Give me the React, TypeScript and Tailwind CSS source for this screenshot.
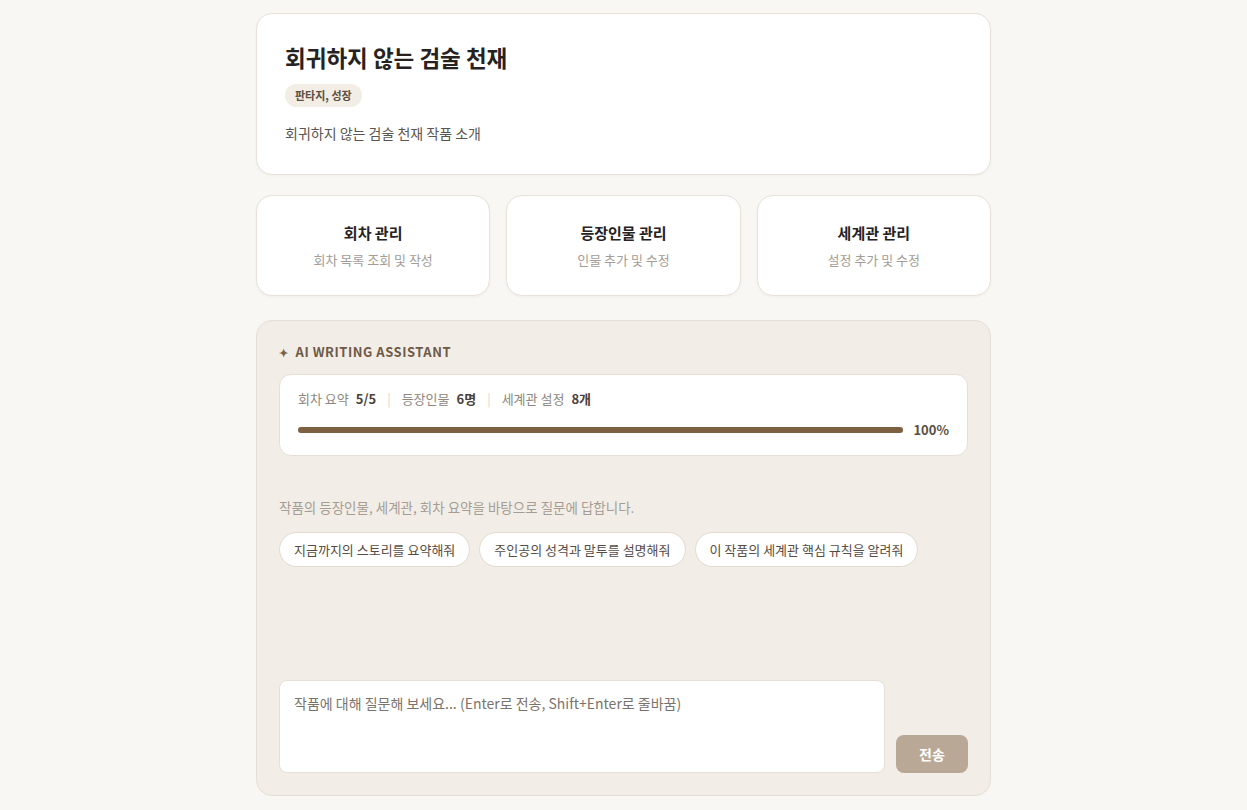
const font = { fontFamily: '"Noto Sans CJK KR", "Noto Sans", sans-serif' };

const menus = [
  { title: '회차 관리', desc: '회차 목록 조회 및 작성' },
  { title: '등장인물 관리', desc: '인물 추가 및 수정' },
  { title: '세계관 관리', desc: '설정 추가 및 수정' },
];

const suggestions = [
  '지금까지의 스토리를 요약해줘',
  '주인공의 성격과 말투를 설명해줘',
  '이 작품의 세계관 핵심 규칙을 알려줘',
];

export default function App() {
  const progress = 100;

  return (
    <div className="min-h-[810px] bg-[#f9f7f3] text-[#2b2724]" style={font}>
      <div className="mx-auto w-[735px] pt-[13px] pb-4">
        {/* work header */}
        <div className="rounded-2xl border border-[#e8e2d8] bg-white px-7 pt-[26px] pb-[31px] shadow-[0_1px_3px_rgba(0,0,0,0.04)]">
          <h1 className="text-[22.5px] font-bold leading-[34px] text-[#26221f]">회귀하지 않는 검술 천재</h1>
          <span className="mt-[10px] inline-block rounded-full bg-[#f2ede5] px-[10px] py-[3px] text-[11px] font-bold leading-[17px] text-[#5e5044]">
            판타지, 성장
          </span>
          <p className="mt-[16px] text-[14px] leading-[20px] text-[#5a5550]">회귀하지 않는 검술 천재 작품 소개</p>
        </div>

        {/* menu cards */}
        <div className="mt-[20px] grid grid-cols-3 gap-4">
          {menus.map((m) => (
            <div
              key={m.title}
              className="flex h-[101px] flex-col items-center justify-center rounded-2xl border border-[#e8e2d8] bg-white shadow-[0_1px_3px_rgba(0,0,0,0.04)]"
            >
              <div className="text-[15px] font-bold leading-[22px] text-[#26221f]">{m.title}</div>
              <div className="mt-[7px] text-[13px] leading-[18px] text-[#a39d96]">{m.desc}</div>
            </div>
          ))}
        </div>

        {/* assistant panel */}
        <div className="mt-[24px] rounded-2xl border border-[#e5dfd5] bg-[#f2eee7] p-[22px]">
          <div className="flex items-center gap-[7px] text-[13px] font-bold leading-[18px] tracking-[0.04em] text-[#6f5a47]">
            <span className="text-[11px] text-[#7d5f42]">✦</span>
            AI WRITING ASSISTANT
          </div>

          <div className="mt-[13px] rounded-xl border border-[#e5dfd5] bg-white px-[18px] pt-[15px] pb-[16px]">
            <div className="flex items-center text-[13px] leading-[18px] text-[#8e877f]">
              <span>회차 요약</span>
              <span className="ml-[7px] font-bold text-[#4a413a]">5/5</span>
              <span className="mx-[11px] text-[#ddd6cc]">|</span>
              <span>등장인물</span>
              <span className="ml-[7px] font-bold text-[#4a413a]">6명</span>
              <span className="mx-[11px] text-[#ddd6cc]">|</span>
              <span>세계관 설정</span>
              <span className="ml-[7px] font-bold text-[#4a413a]">8개</span>
            </div>
            <div className="mt-[13px] flex items-center gap-[10px]">
              <div className="h-[6px] flex-1 rounded-full bg-[#ece6dc]">
                <div className="h-full rounded-full bg-[#7d5f42]" style={{ width: `${progress}%` }} />
              </div>
              <span className="text-[13px] font-bold leading-[18px] text-[#5a4f45]">{progress}%</span>
            </div>
          </div>

          <p className="mt-[41px] text-[13.5px] leading-[20px] text-[#a59d93]">
            작품의 등장인물, 세계관, 회차 요약을 바탕으로 질문에 답합니다.
          </p>
          <div className="mt-[15px] flex gap-[9px]">
            {suggestions.map((s) => (
              <button
                key={s}
                className="h-[35px] rounded-full border border-[#e2dace] bg-white px-[14px] text-[13px] text-[#574d44]"
                style={font}
              >
                {s}
              </button>
            ))}
          </div>

          <div className="mt-[113px] flex items-end gap-[11px]">
            <textarea
              className="h-[93px] flex-1 resize-none rounded-lg border border-[#e5dfd5] bg-white px-[14px] py-[12px] text-[14px] leading-[20px] outline-none placeholder:text-[#7a736b]"
              style={font}
              placeholder="작품에 대해 질문해 보세요... (Enter로 전송, Shift+Enter로 줄바꿈)"
            />
            <button
              className="h-[38px] w-[72px] rounded-lg bg-[#b9a896] text-[14px] font-bold text-white"
              style={font}
            >
              전송
            </button>
          </div>
        </div>
      </div>
    </div>
  );
}
